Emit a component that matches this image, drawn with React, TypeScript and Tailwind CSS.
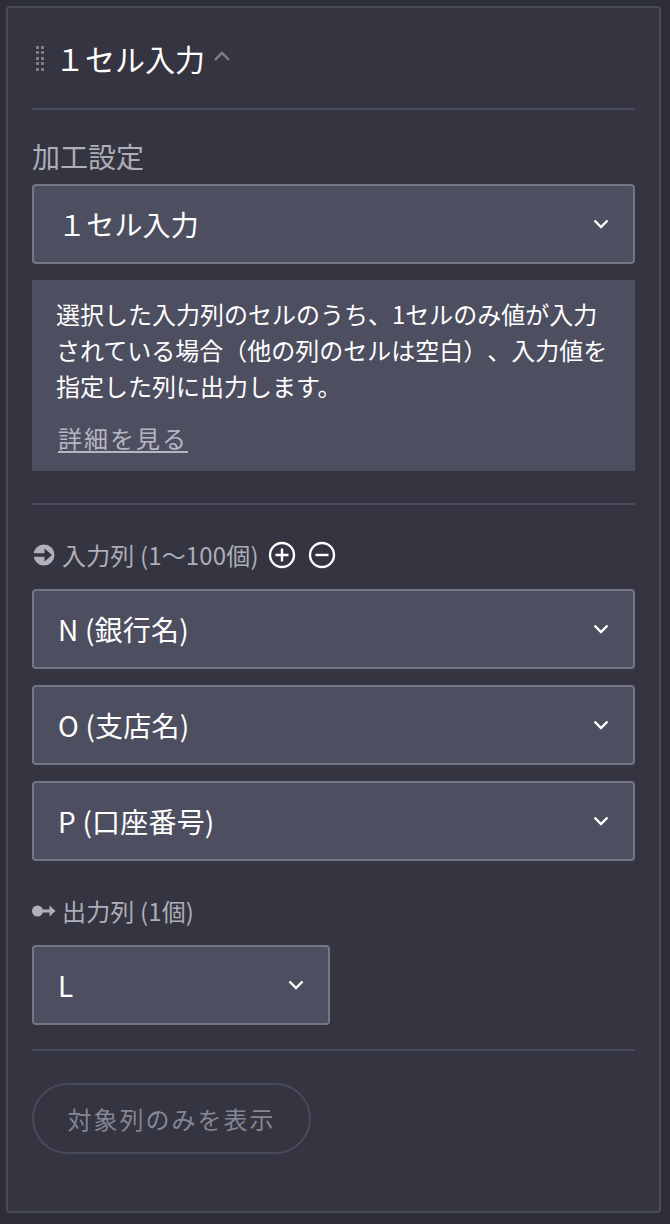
import React from 'react';

const cjk = 'font-["Noto_Sans_CJK_JP","Noto_Sans",sans-serif]';

const Chevron = () => (
  <svg width="16" height="10" viewBox="0 0 16 10" fill="none" className="shrink-0">
    <path d="M1.5 1.5 L8 8 L14.5 1.5" stroke="#ffffff" strokeWidth="2.4" />
  </svg>
);

const Select = ({ label, className = 'w-full' }: { label: string; className?: string }) => (
  <div className={`${className} h-20 flex items-center justify-between pl-[24px] pr-[24px] bg-[#4d4e5f] border-2 border-[#757684] rounded-[4px]`}>
    <span className="text-[28px] leading-none tracking-[0.2px] text-white">{label}</span>
    <Chevron />
  </div>
);

const Divider = () => <div className="h-[2px] bg-[#4a4b5a]" />;

const Grip = () => (
  <div className="grid grid-cols-2 gap-x-[2px] gap-y-[2.5px] w-[8px]">
    {Array.from({ length: 10 }).map((_, i) => (
      <div key={i} className="w-[3px] h-[3px] bg-[#7c7d8a]" />
    ))}
  </div>
);

const RoundBtn = ({ minus }: { minus?: boolean }) => (
  <svg width="28" height="28" viewBox="0 0 28 28" fill="none" className="shrink-0">
    <circle cx="14" cy="14" r="12" stroke="#ffffff" strokeWidth="2.4" />
    <path d={minus ? 'M7.5 14 H20.5' : 'M7.5 14 H20.5 M14 7.5 V20.5'} stroke="#ffffff" strokeWidth="2.4" />
  </svg>
);

export default function App() {
  return (
    <div className={`${cjk} w-[670px] h-[1224px] bg-[#2d2e38] pt-[6px] px-[6px] [text-spacing-trim:space-all]`}>
      <div className="w-[655px] h-[1207px] bg-[#343540] border-2 border-[#4a4b5a] rounded-[4px] px-6">
        <div className="h-[100px] flex items-center">
          <div className="ml-[4px] mr-[11px]"><Grip /></div>
          <span className="text-[30px] leading-none text-white">１セル入力</span>
          <svg width="18" height="12" viewBox="0 0 18 12" fill="none" className="ml-2 mb-1">
            <path d="M2 10 L9 3 L16 10" stroke="#7f808d" strokeWidth="2.4" />
          </svg>
        </div>
        <Divider />

        <div className="mt-[29px] h-[34px] flex items-center text-[28px] leading-none text-[#adaeb9]">加工設定</div>
        <div className="mt-[11px]"><Select label="１セル入力" /></div>

        <div className="mt-4 h-[191px] bg-[#4d4e5f] pl-[24px] pr-4 pt-[16px]">
          <p className="text-[24px] leading-[36px] text-white whitespace-nowrap">
            選択した入力列のセルのうち、1セルのみ値が入力<br />
            されている場合（他の列のセルは空白）、入力値を<br />
            指定した列に出力します。
          </p>
          <a className="block ml-[2px] mt-[16px] text-[24px] leading-[36px] tracking-[2px] text-[#b5b6c1] underline decoration-2 underline-offset-[3px]">詳細を見る</a>
        </div>

        <div className="mt-[32px]"><Divider /></div>

        <div className="mt-[34px] h-[32px] flex items-center">
          <svg width="22" height="22" viewBox="0 0 22 22" className="shrink-0 ml-[1px]">
            <circle cx="11" cy="11" r="10.5" fill="#b0b1bd" />
            <path d="M0 9.2 H11.5 V4.5 L19 11 L11.5 17.5 V12.8 H0 Z" fill="#343540" />
          </svg>
          <span className="ml-[7px] text-[24px] leading-none tracking-[0.15px] text-[#adaeb9]">入力列 (1〜100個)</span>
          <div className="ml-[9px] flex items-center gap-3"><RoundBtn /><RoundBtn minus /></div>
        </div>

        <div className="mt-[18px] flex flex-col gap-4">
          <Select label="N (銀行名)" />
          <Select label="O (支店名)" />
          <Select label="P (口座番号)" />
        </div>

        <div className="mt-[34px] h-[32px] flex items-center">
          <svg width="24" height="14" viewBox="0 0 24 14" className="shrink-0">
            <circle cx="5.5" cy="7" r="5.5" fill="#b0b1bd" />
            <path d="M10 5.4 H17.5 V1.5 L23.5 7 L17.5 12.5 V8.6 H10 Z" fill="#b0b1bd" />
          </svg>
          <span className="ml-[6px] text-[24px] leading-none tracking-[0.15px] text-[#adaeb9]">出力列 (1個)</span>
        </div>

        <div className="mt-[18px]"><Select label="L" className="w-[298px]" /></div>

        <div className="mt-6"><Divider /></div>

        <div className="mt-[32px] w-[279px] h-[71px] rounded-full border-2 border-[#4a4b5a] flex items-center justify-center text-[24px] leading-none tracking-[2px] text-[#858694]">
          対象列のみを表示
        </div>
      </div>
    </div>
  );
}
